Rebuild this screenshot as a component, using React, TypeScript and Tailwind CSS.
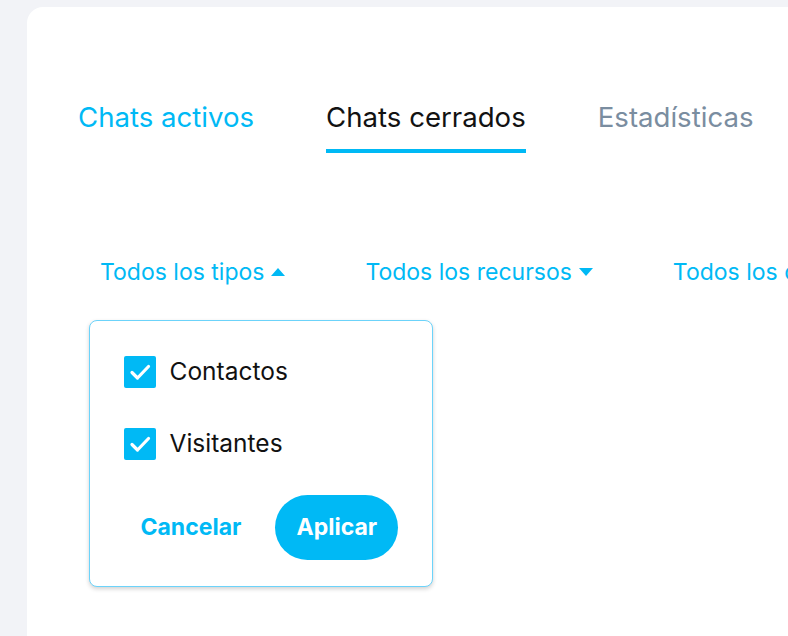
import React from "react";

function Check() {
  return (
    <span className="flex h-8 w-8 shrink-0 items-center justify-center rounded-[2px] bg-[#00b9f5]">
      <svg width="24" height="20" viewBox="0 0 24 20" fill="none">
        <path d="M4 10.5l5.5 5.5L20.5 4.5" stroke="white" strokeWidth="3.2" strokeLinecap="round" strokeLinejoin="round" />
      </svg>
    </span>
  );
}

function Caret({ up }: { up?: boolean }) {
  return (
    <svg width="14" height="8" viewBox="0 0 14 8" className="ml-[7px]">
      {up ? <path d="M0 8L7 0L14 8Z" fill="#00b9f5" /> : <path d="M0 0L7 8L14 0Z" fill="#00b9f5" />}
    </svg>
  );
}

export default function App() {
  return (
    <div className="h-[636px] w-[788px] overflow-hidden bg-[#f2f3f7] pl-[27px] pt-[7px]" style={{ fontFamily: "Inter, 'Noto Sans', sans-serif" }}>
      <div className="h-[700px] w-[800px] rounded-tl-[16px] bg-white pl-[51px] pt-[91px]">
        <div className="flex items-start gap-[72px] text-[27.6px] leading-[38px] whitespace-nowrap">
          <div className="text-[#00b9f5]">Chats activos</div>
          <div className="flex flex-col">
            <span className="text-[#121212]">Chats cerrados</span>
            <span className="mt-[13px] h-[4px] w-full bg-[#00b9f5]" />
          </div>
          <div className="text-[#7a8da0]">Estadísticas</div>
        </div>
        <div className="ml-[22px] mt-[104px] flex items-center text-[23px] leading-[30px] text-[#00b9f5] whitespace-nowrap">
          <span className="flex items-center">Todos los tipos<Caret up /></span>
          <span className="ml-[80px] flex items-center">Todos los recursos<Caret /></span>
          <span className="ml-[80px] flex items-center">Todos los canales<Caret /></span>
        </div>
        <div className="ml-[11px] mt-[33px] w-[344px] rounded-[8px] border-[1.5px] border-[#6cd3fa] bg-white pb-[26px] pl-[33.5px] pt-[34.5px] shadow-[0_2px_4px_rgba(0,0,0,0.18)]">
          <label className="flex h-8 items-center gap-[14px] text-[24.5px] text-[#111]">
            <Check />
            Contactos
          </label>
          <label className="mt-[40px] flex h-8 items-center gap-[14px] text-[24.5px] text-[#111]">
            <Check />
            Visitantes
          </label>
          <div className="mt-[35px] flex items-center">
            <button className="ml-[17px] text-[23px] font-bold text-[#00b9f5]">Cancelar</button>
            <button className="ml-[34px] h-[65px] w-[123px] rounded-full bg-[#00b9f5] text-[23px] font-bold text-white">Aplicar</button>
          </div>
        </div>
      </div>
    </div>
  );
}
